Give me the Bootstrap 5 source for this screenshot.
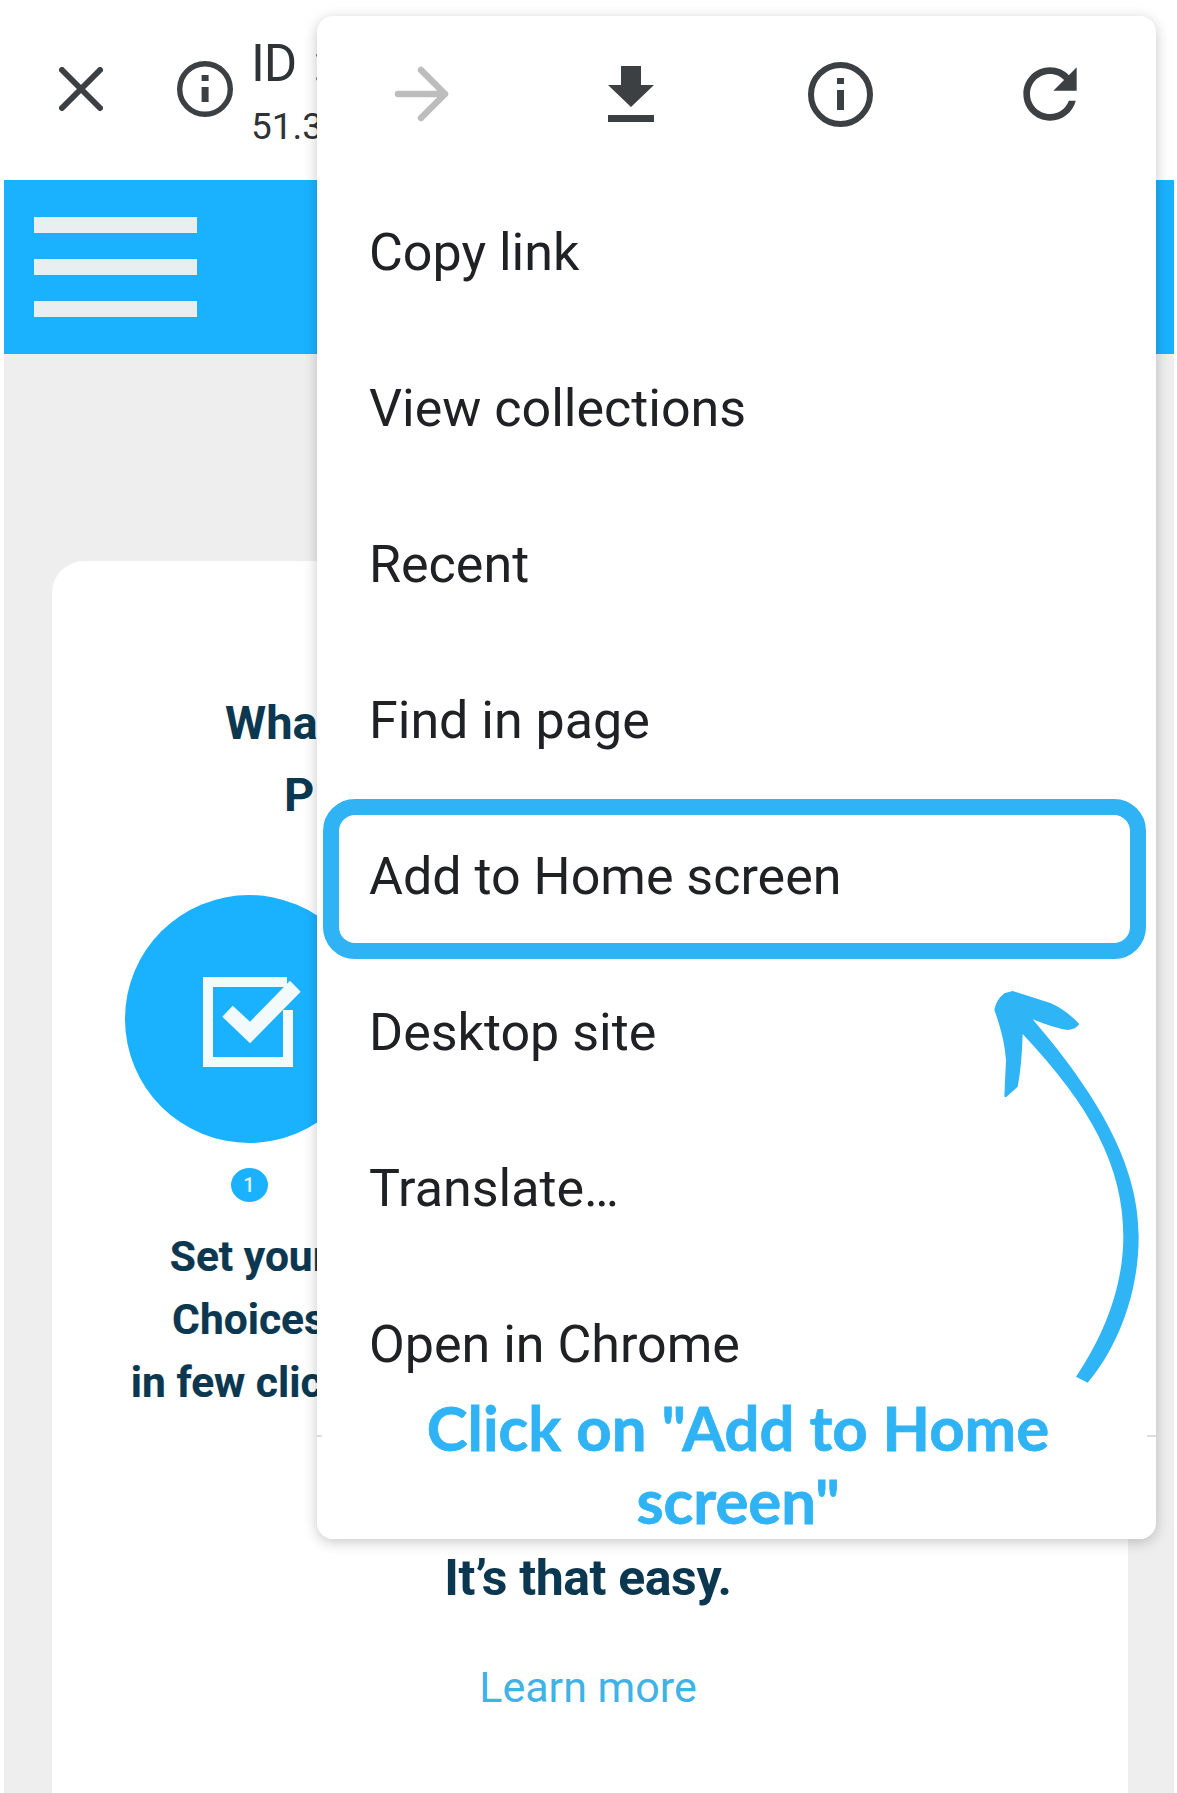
<!doctype html>
<html lang="en"><head><meta charset="utf-8"><title>Add to Home screen</title>
<link href="https://cdn.jsdelivr.net/npm/bootstrap@5.3.0/dist/css/bootstrap.min.css" rel="stylesheet">
<style>
html,body{margin:0;height:1793px;overflow:hidden;background:#fff;font-family:Roboto,sans-serif}
.topstrip{height:180px;color:#303336;padding-bottom:2px}
.xicon{margin-left:59px;width:44px;height:44px}
.tinfo{margin-left:74px;width:56px;height:56px}
.idtext{margin:39px 0 0 18px;white-space:nowrap;font-weight:400}
.idline{font-size:51px;line-height:50px;letter-spacing:-1px;word-spacing:5px}
.ipline{font-size:37px;line-height:40px;margin-top:18px}
.bluebar{height:174px;margin:0 3px 0 4px;background:#1ab2ff;padding:37px 0 0 30px}
.burger{width:163px;height:16px;background:#e9eff0;margin-bottom:26px}
.pagebg{margin:0 3px 0 4px;background:#eee;height:1439px;padding:207px 46px 0 48px}
.sheet{height:1300px;border-radius:32px 32px 0 0;padding-top:126px;color:#0b3850;font-weight:700}
.headline{font-size:47px;line-height:72px;height:72px}
.hl-a{margin-left:173px}.hl-b{margin-left:232px}
.stepcol{margin:64px 0 0 73px;width:248px;text-align:center}
.stepdisc{width:248px;height:248px;border-radius:50%;background:#1ab2ff}
.checkmark{margin:6px 0 0 6px}
.stepnum{width:37px;height:34px;border-radius:50%;background:#1ab2ff;color:#dff4ff;font-size:20px;line-height:34px;margin:25px auto 24px;font-weight:500}
.steptext{font-size:42.5px;line-height:62.8px;white-space:nowrap;margin-left:-60px;margin-right:-60px;-webkit-text-stroke:.2px #0b3850}
.easy{font-size:50px;line-height:72px;margin-top:128px;padding-right:4px;letter-spacing:-.4px}
.learn{display:block;font-size:43px;line-height:60px;margin-top:43px;padding-right:4px;color:#3fb2e6;font-weight:400;text-decoration:none}
.popmenu{left:317px;top:16px;width:839px;height:1523px;background:#fff;border-radius:16px;box-shadow:0 3px 14px rgba(0,0,0,.22);overflow:hidden}
.iconrow{height:159px;padding-bottom:3px}
.iconcell{width:209.3px}
.menuitem{height:156px;line-height:156px;padding:0 0 0 52px;font-size:52px;color:#202124;border:0;background:transparent}
.menudiv{position:absolute;top:1419px;left:0;right:0;height:2px;background:#ddd}
.callout{left:5px;right:9px;bottom:0;height:148px;background:#fff;padding:0 0 2px 7px;color:#2fb3f4;font-family:Lato,sans-serif;font-weight:700;font-size:61.7px;line-height:73px;text-align:center;-webkit-text-stroke:.8px #2fb3f4}
.ringbox{left:6px;top:783px;width:823px;height:160px;border:16px solid #2fb3f4;border-radius:32px}
.swoosh{left:633px;top:944px;width:227px;height:440px}
</style></head>
<body class="position-relative">
<div class="topstrip d-flex align-items-center">
  <svg class="xicon" viewBox="0 0 44 44"><path d="M3 3 41 41M41 3 3 41" stroke="#3c4043" stroke-width="6" stroke-linecap="round"/></svg>
  <svg class="tinfo" viewBox="0 0 56 56"><circle cx="28" cy="28" r="25.3" fill="none" stroke="#3c4043" stroke-width="5.4"/><rect x="24.6" y="14" width="7" height="6" fill="#3c4043"/><rect x="24.6" y="26" width="7" height="15" fill="#3c4043"/></svg>
  <div class="idtext align-self-start"><div class="idline">ID :</div><div class="ipline">51.3</div></div>
</div>
<div class="bluebar"><div class="burger"></div><div class="burger"></div><div class="burger"></div></div>
<div class="pagebg">
  <div class="card border-0 sheet">
    <div class="headline hl-a">What</div>
    <div class="headline hl-b">P</div>
    <div class="stepcol">
      <div class="stepdisc d-flex align-items-center justify-content-center">
        <svg class="checkmark" width="98" height="90" viewBox="0 0 98 90"><path d="M84 5H5V85H85V33" fill="none" stroke="#f2fafd" stroke-width="10"/><path d="M19.3 39.7 29.7 28.7 47 44.7 87 3.7 97.7 14.7 47 66.3Z" fill="#f2fafd"/></svg>
      </div>
      <div class="stepnum">1</div>
      <div class="steptext">Set your</div>
      <div class="steptext">Choices</div>
      <div class="steptext">in few clicks</div>
    </div>
    <div class="easy text-center">It’s that easy.</div>
    <a class="learn text-center" href="#">Learn more</a>
  </div>
</div>
<div class="popmenu position-absolute">
  <div class="iconrow d-flex align-items-center">
    <div class="iconcell d-flex justify-content-center"><svg width="56" height="56" viewBox="0 0 56 56"><path d="M4 28H51M27 4 51 28 27 52" fill="none" stroke="#bdbdbd" stroke-width="6.5" stroke-linecap="round" stroke-linejoin="round"/></svg></div>
    <div class="iconcell d-flex justify-content-center"><svg width="46" height="56" viewBox="0 0 46 56"><path d="M13 0H33V19H46L23 41 0 19H13ZM0 49H46V56H0Z" fill="#3c4043"/></svg></div>
    <div class="iconcell d-flex justify-content-center"><svg width="65" height="65" viewBox="0 0 65 65"><circle cx="32.5" cy="32.5" r="29.5" fill="none" stroke="#3c4043" stroke-width="6"/><rect x="29" y="16" width="7" height="6" fill="#3c4043"/><rect x="29" y="28" width="7" height="20" fill="#3c4043"/></svg></div>
    <div class="iconcell d-flex justify-content-center"><svg width="80" height="80" viewBox="0 0 24 24"><path fill="#3c4043" d="M17.65 6.35C16.2 4.9 14.21 4 12 4c-4.42 0-7.99 3.58-7.99 8s3.57 8 7.99 8c3.73 0 6.84-2.55 7.73-6h-2.08c-.82 2.33-3.04 4-5.65 4-3.31 0-6-2.69-6-6s2.69-6 6-6c1.66 0 3.14.69 4.22 1.78L13 11h7V4l-2.35 2.35z"/></svg></div>
  </div>
  <div class="list-group list-group-flush">
    <div class="list-group-item menuitem">Copy link</div>
    <div class="list-group-item menuitem">View collections</div>
    <div class="list-group-item menuitem">Recent</div>
    <div class="list-group-item menuitem">Find in page</div>
    <div class="list-group-item menuitem">Add to Home screen</div>
    <div class="list-group-item menuitem">Desktop site</div>
    <div class="list-group-item menuitem">Translate…</div>
    <div class="list-group-item menuitem">Open in Chrome</div>
  </div>
  <div class="menudiv"></div>
  <div class="callout position-absolute">Click on "Add to Home screen"</div>
  <div class="ringbox position-absolute"></div>
  <svg class="swoosh position-absolute" viewBox="0 0 675 1320"><path fill="#2fb4f6" d="M375 1250 410 1268C470 1200 563 1040 563 830 563 640 470 440 245 178Q310 205 350 210 375 208 385 192 345 150 300 130L185 93 160 100Q135 120 130 150 160 230 165 300L160 410 165 412 200 380Q212 320 215 222C420 440 517 620 517 830 517 990 450 1140 375 1250Z"/></svg>
</div>
<script src="https://cdn.jsdelivr.net/npm/bootstrap@5.3.0/dist/js/bootstrap.bundle.min.js"></script>
</body></html>
